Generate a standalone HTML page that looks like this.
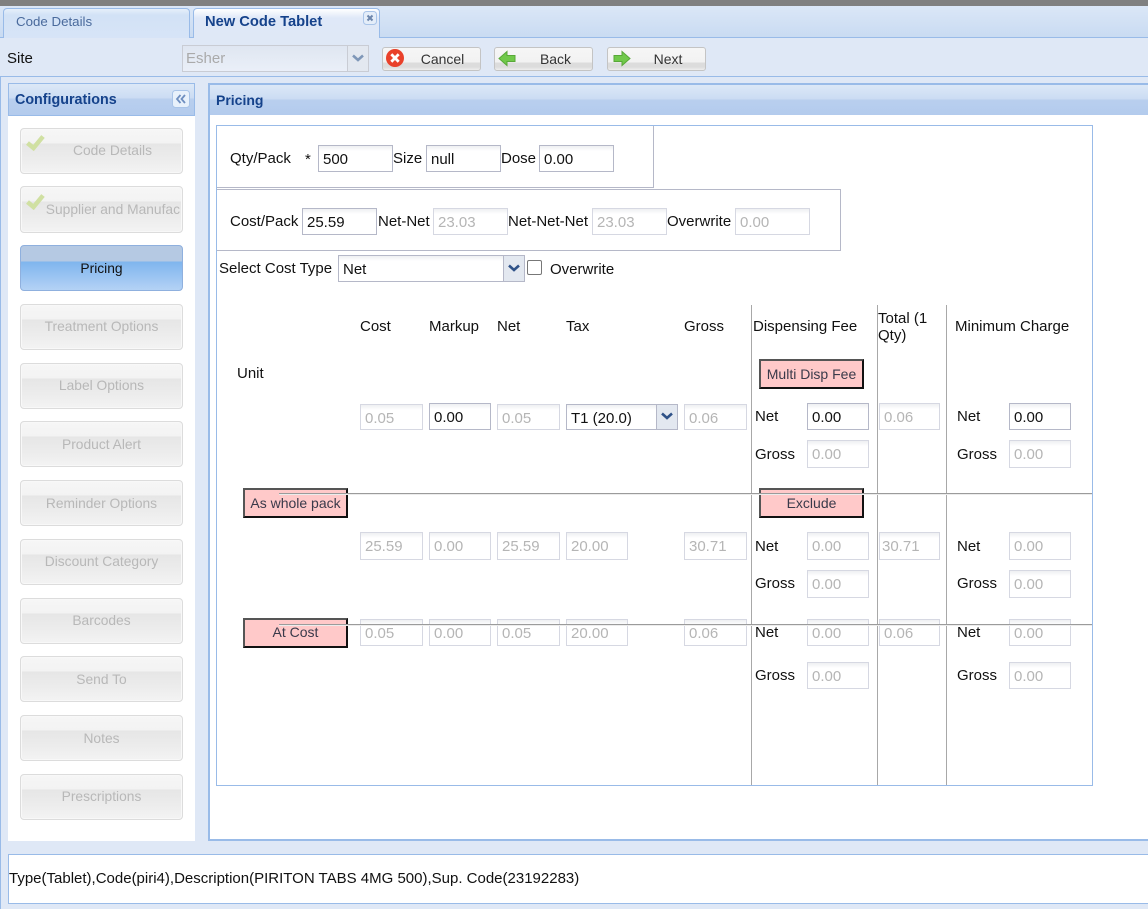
<!DOCTYPE html>
<html><head><meta charset="utf-8"><style>
html,body{margin:0;padding:0}
body{width:1148px;height:909px;overflow:hidden;position:relative;background:#dfe8f6;font-family:"Liberation Sans",Arial,sans-serif;font-size:15px;color:#111}
div,span,svg{position:absolute;box-sizing:border-box}
.t{white-space:nowrap;line-height:18px;margin-top:1px}
.i{border:1px solid #b5b8c8;background:linear-gradient(#eef0f2,#fff 5px,#fff);padding-left:6px;font-size:15px;line-height:27px;color:#111;white-space:nowrap;overflow:hidden}
.d{border-color:#d6d8e2;color:#b5b5b5;padding-left:4px}
.r1{line-height:28px!important}
.b{left:20px;width:163px;height:46px;border:1px solid #dcdcdc;border-radius:4px;background:linear-gradient(#f6f6f6,#f3f3f3 14px,#e6e6e6 15px,#ececec 30px,#f3f3f3);color:#b8b8b8;text-align:center;font-size:13.8px;line-height:46px;white-space:nowrap;overflow:hidden;box-shadow:inset 0 0 0 1px #f8f8f8}
.u{line-height:44px}
.p{background:#ffc9c9;border:2px solid;border-color:#555 #111 #111 #555;width:105px;height:30px;text-align:center;font-size:14px;line-height:26px;color:#3a3a4a;white-space:nowrap}
.tb{top:47px;height:24px;width:99px;border:1px solid #c4c4c4;border-radius:3px;background:linear-gradient(#f6f6f6,#f2f2f2 14px,#dcdcdc 15px,#dcdcdc 19px,#eee);font-size:14px;line-height:22px;color:#333;text-align:center;padding-left:22px}
.hd{background:linear-gradient(#dce8f7,#cbdcf3 14px,#b9cfee 15px,#b3cbed);color:#15428b;font-weight:bold;font-size:14px}
.v{width:1px;top:305px;height:480px;background:#a8a8a8}
.h{height:2px;left:279px;width:813px;border-top:1px solid #9b9b9b;border-bottom:1px solid #ececec}
</style></head><body>
<div style="left:0;top:0;width:1148px;height:6px;background:#808080"></div>
<div style="left:0;top:6px;width:1148px;height:31px;background:linear-gradient(#dbe7f7,#c9dbf2)"></div>
<div style="left:0;top:37px;width:1148px;height:1px;background:#99bbe8"></div>
<div style="left:3px;top:8px;width:187px;height:30px;border:1px solid #99bbe8;border-bottom:0;border-radius:4px 4px 0 0;background:linear-gradient(#e6effa,#d2e2f6 6px,#d7e4f7);color:#4a6a9c;font-size:13.3px;line-height:25px;padding-left:12px">Code Details</div>
<div style="left:193px;top:8px;width:187px;height:30px;border:1px solid #99bbe8;border-bottom:0;border-radius:4px 4px 0 0;background:linear-gradient(#fff,#dfe8f8 9px,#dfe8f6);color:#15428b;font-weight:bold;font-size:14.7px;line-height:26px;padding-left:11px">New Code Tablet</div>
<svg style="left:363px;top:11px" width="15" height="15" viewBox="0 0 15 15"><rect x=".5" y=".5" width="13" height="13" rx="3" fill="#e4edf9" stroke="#a9c4e8"/><path d="M4.500 4.500l5 5M9.500 4.500l-5 5" stroke="#6d86ad" stroke-width="2"/></svg>

<div class="t" style="left:7px;top:49px">Site</div>
<div style="left:182px;top:45px;width:187px;height:27px;border:1px solid #c9ccd4;background:linear-gradient(#dfe6f1,#eaeff8);color:#aaa;font-size:15px;line-height:26px;padding-left:3px">Esher</div>
<div style="left:347px;top:45px;width:22px;height:27px;border:1px solid #c9ccd4;background:#e3e8f0"></div>
<svg style="left:351px;top:54px" width="14" height="9" viewBox="0 0 14 9"><path d="M2 1.500l5 4.500 5-4.500" fill="none" stroke="#7f97b8" stroke-width="2.600"/></svg>

<div class="tb" style="left:382px">Cancel</div>
<svg style="left:385px;top:48px" width="20" height="20" viewBox="0 0 20 20"><circle cx="10" cy="10" r="9" fill="#e9412a"/><path d="M6.300 6.300l7.400 7.400M13.700 6.300l-7.400 7.400" stroke="#fff" stroke-width="2.800"/></svg>
<div class="tb" style="left:494px;padding-left:24px">Back</div>
<svg style="left:498px;top:50px" width="20" height="17" viewBox="0 0 20 17"><path d="M1 8.500L9 1.500v4h8v6H9v4z" fill="#70c94a" stroke="#58a838"/></svg>
<div class="tb" style="left:607px;padding-left:23px">Next</div>
<svg style="left:611px;top:50px" width="20" height="17" viewBox="0 0 20 17"><path d="M19 8.500L11 1.500v4H3v6h8v4z" fill="#70c94a" stroke="#58a838"/></svg>

<div style="left:0;top:76px;width:1148px;height:1px;background:#99bbe8"></div>
<div style="left:0;top:77px;width:1px;height:832px;background:#99bbe8"></div>

<div style="left:8px;top:116px;width:187px;height:725px;background:#fff"></div>
<div class="hd" style="left:8px;top:83px;width:187px;height:33px;border:1px solid #99bbe8;line-height:32px;padding-left:6px;font-size:14.3px">Configurations</div>
<svg style="left:172px;top:90px" width="18" height="18" viewBox="0 0 18 18"><rect x=".5" y=".5" width="17" height="17" rx="3" fill="#e8f1fb" stroke="#a9c4e8"/><path d="M8.500 5L5 9l3.500 4M13 5L9.500 9l3.500 4" fill="none" stroke="#6f8fc0" stroke-width="1.800"/></svg>

<div class="b u" style="top:128px;padding-left:22px">Code Details</div>
<div class="b" style="top:186px;height:47px;text-align:right;padding-right:2px;line-height:45px;">Supplier and Manufac</div>
<div class="b" style="top:245px;background:linear-gradient(#b5c9e3,#b5c9e3 15px,#7fb5ee 16px,#b4d2f5);border-color:#8fb0de;color:#111;box-shadow:none">Pricing</div>
<div class="b u" style="top:304px">Treatment Options</div>
<div class="b u" style="top:363px">Label Options</div>
<div class="b" style="top:421px">Product Alert</div>
<div class="b" style="top:480px">Reminder Options</div>
<div class="b u" style="top:539px">Discount Category</div>
<div class="b u" style="top:598px">Barcodes</div>
<div class="b" style="top:656px">Send To</div>
<div class="b" style="top:715px">Notes</div>
<div class="b u" style="top:774px">Prescriptions</div>
<svg style="left:25px;top:132px" width="20" height="19" viewBox="0 0 20 19"><path d="M2.500 11l6 5L18 4.500" fill="none" stroke="#d0e0a2" stroke-width="4.500"/></svg>
<svg style="left:25px;top:191px" width="20" height="19" viewBox="0 0 20 19"><path d="M2.500 11l6 5L18 4.500" fill="none" stroke="#d0e0a2" stroke-width="4.500"/></svg>

<div style="left:208px;top:83px;width:940px;height:758px;background:#fff;border:2px solid #99bbe8;border-right:0"></div>
<div class="hd" style="left:210px;top:85px;width:938px;height:30px;line-height:30px;padding-left:6px">Pricing</div>

<div style="left:216px;top:125px;width:877px;height:661px;border:1px solid #99bbe8"></div>
<div style="left:217px;top:126px;width:437px;height:62px;border:1px solid #b5b8c8;border-left:0;border-top:0"></div>
<div style="left:217px;top:189px;width:624px;height:62px;border:1px solid #b5b8c8;border-left:0"></div>

<div class="t" style="left:230px;top:149px">Qty/Pack</div>
<div class="t" style="left:305px;top:150px">*</div>
<div class="i" style="left:318px;top:145px;width:75px;height:27px;padding-left:4px">500</div>
<div class="t" style="left:393px;top:149px">Size</div>
<div class="i" style="left:426px;top:145px;width:75px;height:27px;padding-left:4px">null</div>
<div class="t" style="left:501px;top:149px">Dose</div>
<div class="i" style="left:539px;top:145px;width:75px;height:27px;padding-left:4px">0.00</div>

<div class="t" style="left:230px;top:212px">Cost/Pack</div>
<div class="i" style="left:302px;top:208px;width:75px;height:27px;padding-left:4px">25.59</div>
<div class="t" style="left:378px;top:212px">Net-Net</div>
<div class="i d" style="left:433px;top:208px;width:75px;height:27px">23.03</div>
<div class="t" style="left:508px;top:212px">Net-Net-Net</div>
<div class="i d" style="left:592px;top:208px;width:75px;height:27px">23.03</div>
<div class="t" style="left:667px;top:212px">Overwrite</div>
<div class="i d" style="left:735px;top:208px;width:75px;height:27px">0.00</div>

<div class="t" style="left:219px;top:259px">Select Cost Type</div>
<div class="i" style="left:338px;top:255px;width:187px;height:27px;padding-left:4px">Net</div>
<div style="left:503px;top:255px;width:22px;height:27px;border:1px solid #b5b8c8;background:#e3e8f0"></div>
<svg style="left:507px;top:264px" width="14" height="9" viewBox="0 0 14 9"><path d="M2 1.500l5 4.500 5-4.500" fill="none" stroke="#2f5288" stroke-width="2.600"/></svg>
<div style="left:527px;top:260px;width:15px;height:15px;border:1px solid #777;border-radius:2px;background:#fff"></div>
<div class="t" style="left:550px;top:260px">Overwrite</div>

<div class="t" style="left:360px;top:317px">Cost</div>
<div class="t" style="left:429px;top:317px">Markup</div>
<div class="t" style="left:497px;top:317px">Net</div>
<div class="t" style="left:566px;top:317px">Tax</div>
<div class="t" style="left:684px;top:317px">Gross</div>
<div class="t" style="left:753px;top:317px">Dispensing Fee</div>
<div class="t" style="left:878px;top:309px">Total (1</div>
<div class="t" style="left:878px;top:326px">Qty)</div>
<div class="t" style="left:955px;top:317px">Minimum Charge</div>
<div class="t" style="left:237px;top:364px">Unit</div>

<div class="v" style="left:751px"></div>
<div class="v" style="left:877px"></div>
<div class="v" style="left:946px"></div>

<div class="p" style="left:759px;top:359px">Multi Disp Fee</div>

<div class="i d r1" style="left:360px;top:404px;width:63px;height:26px">0.05</div>
<div class="i r1" style="left:429px;top:403px;width:62px;height:27px;padding-left:4px">0.00</div>
<div class="i d r1" style="left:497px;top:404px;width:63px;height:26px">0.05</div>
<div class="i r1" style="left:566px;top:404px;width:112px;height:26px;padding-left:4px">T1 (20.0)</div>
<div style="left:656px;top:404px;width:22px;height:26px;border:1px solid #b5b8c8;background:#e3e8f0"></div>
<svg style="left:660px;top:412px" width="14" height="9" viewBox="0 0 14 9"><path d="M2 1.500l5 4.500 5-4.500" fill="none" stroke="#2f5288" stroke-width="2.600"/></svg>
<div class="i d r1" style="left:684px;top:404px;width:63px;height:26px">0.06</div>
<div class="t" style="left:755px;top:407px">Net</div>
<div class="i r1" style="left:807px;top:403px;width:62px;height:27px;padding-left:4px">0.00</div>
<div class="i d r1" style="left:879px;top:403px;width:61px;height:27px">0.06</div>
<div class="t" style="left:957px;top:407px">Net</div>
<div class="i r1" style="left:1009px;top:403px;width:62px;height:27px;padding-left:4px">0.00</div>
<div class="t" style="left:755px;top:445px">Gross</div>
<div class="i d" style="left:807px;top:440px;width:62px;height:28px">0.00</div>
<div class="t" style="left:957px;top:445px">Gross</div>
<div class="i d" style="left:1009px;top:440px;width:62px;height:28px">0.00</div>

<div class="p" style="left:243px;top:488px">As whole pack</div>
<div class="p" style="left:759px;top:488px">Exclude</div>

<div class="i d" style="left:360px;top:532px;width:63px;height:28px">25.59</div>
<div class="i d" style="left:429px;top:532px;width:62px;height:28px">0.00</div>
<div class="i d" style="left:497px;top:532px;width:63px;height:28px">25.59</div>
<div class="i d" style="left:566px;top:532px;width:62px;height:28px">20.00</div>
<div class="i d" style="left:684px;top:532px;width:63px;height:28px">30.71</div>
<div class="t" style="left:755px;top:537px">Net</div>
<div class="i d" style="left:807px;top:532px;width:62px;height:28px">0.00</div>
<div class="i d" style="left:879px;top:532px;width:61px;height:28px;padding-left:2px">30.71</div>
<div class="t" style="left:957px;top:537px">Net</div>
<div class="i d" style="left:1009px;top:532px;width:62px;height:28px">0.00</div>
<div class="t" style="left:755px;top:574px">Gross</div>
<div class="i d" style="left:807px;top:570px;width:62px;height:28px">0.00</div>
<div class="t" style="left:957px;top:574px">Gross</div>
<div class="i d" style="left:1009px;top:570px;width:62px;height:28px">0.00</div>

<div class="p" style="left:243px;top:618px;line-height:24px">At Cost</div>
<div class="i d" style="left:360px;top:619px;width:63px;height:27px">0.05</div>
<div class="i d" style="left:429px;top:619px;width:62px;height:27px">0.00</div>
<div class="i d" style="left:497px;top:619px;width:63px;height:27px">0.05</div>
<div class="i d" style="left:566px;top:619px;width:62px;height:27px">20.00</div>
<div class="i d" style="left:684px;top:619px;width:63px;height:27px">0.06</div>
<div class="t" style="left:755px;top:623px">Net</div>
<div class="i d" style="left:807px;top:619px;width:62px;height:27px">0.00</div>
<div class="i d" style="left:879px;top:619px;width:61px;height:27px">0.06</div>
<div class="t" style="left:957px;top:623px">Net</div>
<div class="i d" style="left:1009px;top:619px;width:62px;height:27px">0.00</div>
<div class="t" style="left:755px;top:666px">Gross</div>
<div class="i d" style="left:807px;top:662px;width:62px;height:27px">0.00</div>
<div class="t" style="left:957px;top:666px">Gross</div>
<div class="i d" style="left:1009px;top:662px;width:62px;height:27px">0.00</div>

<div class="h" style="top:493px"></div>
<div class="h" style="top:624px"></div>

<div style="left:8px;top:854px;width:1140px;height:50px;background:#fff;border:1px solid #99bbe8;border-right:0;line-height:47px;padding-left:0;font-size:15px;white-space:nowrap">Type(Tablet),Code(piri4),Description(PIRITON TABS 4MG 500),Sup. Code(23192283)</div>
</body></html>
